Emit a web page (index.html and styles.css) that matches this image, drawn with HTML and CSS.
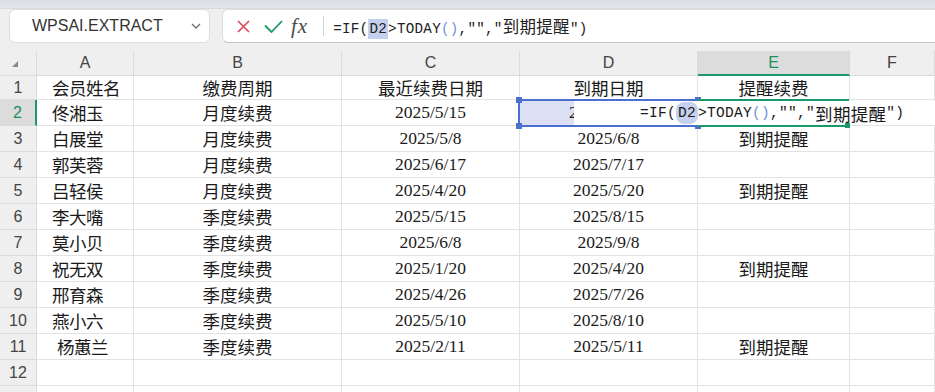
FILE: index.html
```html
<!DOCTYPE html>
<html lang="zh-CN">
<head>
    <meta charset="UTF-8">
    <meta name="viewport" content="width=device-width, initial-scale=1.0">
    <title>会员续费提醒</title>
    <link rel="stylesheet" href="styles.css">
</head>
<body>
    <div class="top-strip"></div>
    <div class="toolbar">
        <div class="name-box">
            <span class="name">WPSAI.EXTRACT</span>
            <svg class="chevron" width="10" height="6" viewBox="0 0 10 6"><path d="M1 1l4 4 4-4" fill="none" stroke="#6a6a6a" stroke-width="1.3"/></svg>
        </div>
        <div class="formula-box">
            <svg class="btn-cancel" width="13" height="13" viewBox="0 0 13 13"><path d="M1 1l11 11M12 1L1 12" stroke="#e0465a" stroke-width="1.6"/></svg>
            <svg class="btn-ok" width="19" height="13" viewBox="0 0 19 13"><path d="M1 5.5l6.5 6.5L18 1" fill="none" stroke="#1d9a63" stroke-width="1.8"/></svg>
            <span class="fx">fx</span>
            <span class="sep"></span>
            <span class="formula">=IF(<span class="ref">D2</span>&gt;TODAY<span class="paren">()</span>,"","<span class="cjk">到期提醒</span>")</span>
        </div>
    </div>

    <div class="sheet-wrap">
        <div class="sheet">
            <div class="corner"><svg width="6" height="6" viewBox="0 0 6 6"><path d="M6 0v6H0z" fill="#8a8a8a"/></svg></div>
            <div class="ch">A</div><div class="ch">B</div><div class="ch">C</div><div class="ch">D</div><div class="ch active">E</div><div class="ch">F</div>

            <div class="rh">1</div><div class="c name">会员姓名</div><div class="c">缴费周期</div><div class="c">最近续费日期</div><div class="c">到期日期</div><div class="c">提醒续费</div><div class="c"></div>
            <div class="rh active">2</div><div class="c name">佟湘玉</div><div class="c">月度续费</div><div class="c date">2025/5/15</div><div class="c date ref-fill">2025/6/15</div><div class="c"></div><div class="c"></div>
            <div class="rh">3</div><div class="c name">白展堂</div><div class="c">月度续费</div><div class="c date">2025/5/8</div><div class="c date">2025/6/8</div><div class="c">到期提醒</div><div class="c"></div>
            <div class="rh">4</div><div class="c name">郭芙蓉</div><div class="c">月度续费</div><div class="c date">2025/6/17</div><div class="c date">2025/7/17</div><div class="c"></div><div class="c"></div>
            <div class="rh">5</div><div class="c name">吕轻侯</div><div class="c">月度续费</div><div class="c date">2025/4/20</div><div class="c date">2025/5/20</div><div class="c">到期提醒</div><div class="c"></div>
            <div class="rh">6</div><div class="c name">李大嘴</div><div class="c">季度续费</div><div class="c date">2025/5/15</div><div class="c date">2025/8/15</div><div class="c"></div><div class="c"></div>
            <div class="rh">7</div><div class="c name">莫小贝</div><div class="c">季度续费</div><div class="c date">2025/6/8</div><div class="c date">2025/9/8</div><div class="c"></div><div class="c"></div>
            <div class="rh">8</div><div class="c name">祝无双</div><div class="c">季度续费</div><div class="c date">2025/1/20</div><div class="c date">2025/4/20</div><div class="c">到期提醒</div><div class="c"></div>
            <div class="rh">9</div><div class="c name">邢育森</div><div class="c">季度续费</div><div class="c date">2025/4/26</div><div class="c date">2025/7/26</div><div class="c"></div><div class="c"></div>
            <div class="rh">10</div><div class="c name">燕小六</div><div class="c">季度续费</div><div class="c date">2025/5/10</div><div class="c date">2025/8/10</div><div class="c"></div><div class="c"></div>
            <div class="rh">11</div><div class="c name">&nbsp;杨蕙兰</div><div class="c">季度续费</div><div class="c date">2025/2/11</div><div class="c date">2025/5/11</div><div class="c">到期提醒</div><div class="c"></div>
            <div class="rh">12</div><div class="c"></div><div class="c"></div><div class="c"></div><div class="c"></div><div class="c"></div><div class="c"></div>
            <div class="rh"></div><div class="c"></div><div class="c"></div><div class="c"></div><div class="c"></div><div class="c"></div><div class="c"></div>
        </div>

        <!-- D2 reference frame -->
        <div class="ref-box">
            <i class="handle tl"></i><i class="handle tr"></i><i class="handle bl"></i><i class="handle br"></i>
        </div>
        <!-- in-cell editor for E2 -->
        <div class="cell-editor">=IF(<span class="ref">D2</span>&gt;TODAY<span class="paren">()</span>,"","<span class="cjk">到期提醒</span>")</div>
        <div class="edit-line top"></div>
        <div class="edit-line bottom"><i class="handle"></i></div>
    </div>
</body>
</html>
```

FILE: styles.css
```css
body {
    margin: 0;
    width: 935px;
    height: 392px;
    overflow: hidden;
    background-color: #efefef;
    font-family: "Noto Sans CJK SC", sans-serif;
}
.top-strip {
    height: 8px;
    background: linear-gradient(#d9dee3, #e4e7ea);
    border-bottom: 1px solid #d6dadf;
}

/* toolbar */
.toolbar {
    display: flex;
    gap: 12px;
    padding-left: 9px;
    height: 34px;
}
.name-box {
    width: 201px;
    box-sizing: border-box;
    background-color: #fff;
    border: 1px solid #dddddd;
    border-radius: 6px;
    display: flex;
    align-items: center;
    padding: 0 8px 0 22px;
}
.name {
    flex: 1;
    font-family: "Liberation Sans", sans-serif;
    font-size: 16px;
    color: #333;
}
.formula-box {
    flex: 1;
    margin-right: -10px;
    background-color: #fff;
    border: 1px solid #dddddd;
    border-bottom-color: #c6c6c6;
    border-radius: 6px;
    display: flex;
    align-items: center;
    padding-left: 14px;
}
.btn-cancel { margin-right: 14px; }
.btn-ok { margin-right: 8px; margin-top: 1px; }
.fx {
    font-family: "Liberation Serif", serif;
    font-style: italic;
    font-size: 21px;
    color: #4a4a4a;
    margin-right: 15px;
    letter-spacing: 1px;
}
.sep {
    width: 1px;
    height: 20px;
    background-color: #d2d2d2;
    margin-right: 9px;
}
.formula {
    font-family: "Liberation Mono", monospace;
    font-size: 14.2px;
    letter-spacing: 0.3px;
    color: #222;
    white-space: nowrap;
}
.formula .ref {
    background-color: #c5d0ee;
    padding: 2px 1px;
}
.formula .cjk {
    font-family: "Noto Sans CJK SC", sans-serif;
    font-size: 16.5px;
}
.paren { color: #7190d8; }

/* sheet */
.sheet-wrap {
    position: relative;
    margin-top: 8px;
}
.sheet {
    display: grid;
    grid-template-columns: 37px 97px 208px 178px 178px 152px 1fr;
    grid-template-rows: 25px 24px repeat(12, 26px);
}
.sheet > div {
    box-sizing: border-box;
    border-right: 1px solid #e2e2e2;
    border-bottom: 1px solid #e2e2e2;
    display: flex;
    align-items: center;
    justify-content: center;
    overflow: hidden;
    white-space: nowrap;
}
.sheet > .corner,
.sheet > .ch,
.sheet > .rh {
    background-color: #efefef;
    border-color: #dadada;
    font-family: "Liberation Sans", sans-serif;
    font-size: 16px;
    color: #444;
}
.sheet > .corner {
    justify-content: flex-start;
    align-items: flex-start;
    padding: 10px 0 0 12px;
}
.sheet > .ch.active {
    background-color: #dcdcdc;
    color: #1c8f62;
    border-bottom: 2px solid #1a9a68;
}
.sheet > .rh.active {
    background-color: #dcdcdc;
    color: #1c8f62;
    border-right: 2px solid #1a9a68;
}
.c {
    background-color: #fff;
    font-size: 17.5px;
    color: #1a1a1a;
}
.sheet > .name {
    justify-content: flex-start;
    padding-left: 15px;
}
.date {
    font-family: "Liberation Serif", serif;
}
.sheet > .ref-fill {
    background-color: #dbe0f4;
    padding-right: 8px;
}

/* overlays on the grid */
.ref-box {
    position: absolute;
    left: 518px;
    top: 48px;
    width: 181px;
    height: 28px;
    box-sizing: border-box;
    border: 2px solid #4b6fcf;
}
.handle {
    position: absolute;
    width: 6px;
    height: 6px;
    background-color: #4b6fcf;
}
.tl { left: -4px; top: -4px; }
.tr { right: -4px; top: -4px; }
.bl { left: -4px; bottom: -4px; }
.br { right: -4px; bottom: -4px; }

.cell-editor {
    position: absolute;
    left: 574px;
    right: 0;
    top: 50px;
    height: 24px;
    background-color: #fff;
    padding-left: 66px;
    display: flex;
    align-items: center;
    font-family: "Liberation Mono", monospace;
    font-size: 14.5px;
    letter-spacing: 0.3px;
    color: #1a1a1a;
    white-space: pre;
}
.cell-editor .ref {
    background-color: #c6d1ef;
    border-radius: 8px;
    padding: 3px 2px;
}
.cell-editor .cjk {
    font-family: "Noto Sans CJK SC", sans-serif;
    font-size: 17.5px;
}
.edit-line {
    position: absolute;
    left: 698px;
    height: 2px;
    background-color: #1a9a68;
}
.edit-line.top { top: 48px; width: 151px; }
.edit-line.bottom { top: 74px; width: 148px; }
.edit-line .handle {
    right: -4px;
    top: -2px;
    width: 5px;
    height: 5px;
    background-color: #1a9a68;
}
```
